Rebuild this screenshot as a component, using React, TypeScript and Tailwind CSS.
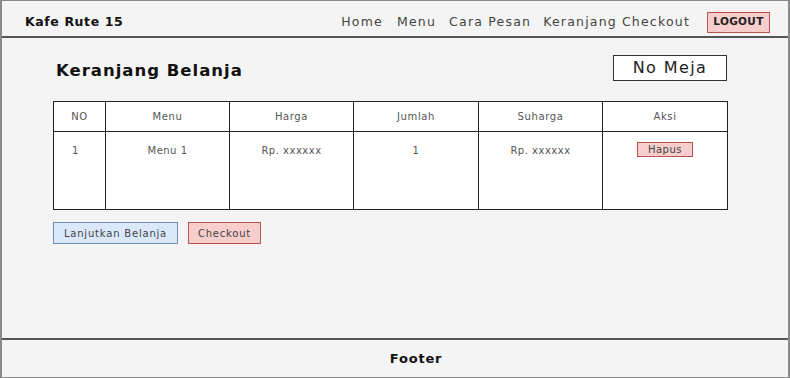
import React from "react";

const font = { fontFamily: '"DejaVu Sans", "Liberation Sans", sans-serif' };

export default function App() {
  const cols = [
    { label: "NO", w: 52 },
    { label: "Menu", w: 124 },
    { label: "Harga", w: 124 },
    { label: "Jumlah", w: 125 },
    { label: "Suharga", w: 124 },
    { label: "Aksi", w: 125 },
  ];
  return (
    <div
      style={font}
      className="w-[790px] h-[378px] bg-[#f4f4f4] border-x-2 border-y border-[#8a8a8a] flex flex-col box-border overflow-hidden"
    >
      <header className="h-[37px] shrink-0 border-b-2 border-[#555] flex items-center pt-[7px] pl-[23px] pr-[18px]">
        <div className="text-[12.5px] font-bold text-[#111] tracking-[0.6px]">Kafe Rute 15</div>
        <nav className="ml-auto flex items-center text-[12.5px] text-[#444] tracking-[1.2px]">
          <span className="mr-[14px]">Home</span>
          <span className="mr-[13px]">Menu</span>
          <span className="mr-[12px]">Cara Pesan</span>
          <span className="mr-[5px]">Keranjang</span>
          <span>Checkout</span>
        </nav>
        <button className="ml-[17px] w-[63px] h-[21px] bg-[#f8cecc] border border-[#b85450] text-[10.5px] font-bold text-[#222] tracking-[0.3px]">
          LOGOUT
        </button>
      </header>

      <main className="flex-1 pl-[51px] pr-[61px] pt-[17px]">
        <div className="flex items-center justify-between h-[26px]">
          <h1 className="pl-[3px] pt-[6px] text-[16.5px] font-bold text-[#111] tracking-[1px]">Keranjang Belanja</h1>
          <div className="w-[114px] h-[26px] bg-white border border-[#333] flex items-center justify-center text-[16px] text-[#222] tracking-[1.4px]">
            No Meja
          </div>
        </div>

        <table className="mt-[20px] border-collapse bg-white table-fixed w-[674px]">
          <colgroup>
            {cols.map((c) => (
              <col key={c.label} style={{ width: c.w }} />
            ))}
          </colgroup>
          <thead>
            <tr className="h-[30px]">
              {cols.map((c) => (
                <th
                  key={c.label}
                  className="border border-[#222] font-normal text-[10px] text-[#555] text-center align-middle tracking-[0.6px]"
                >
                  {c.label}
                </th>
              ))}
            </tr>
          </thead>
          <tbody>
            <tr className="h-[78px] text-[10px] text-[#555] tracking-[0.5px]">
              <td className="border border-[#222] align-top pt-[11px] pl-[18px] text-left">1</td>
              <td className="border border-[#222] align-top pt-[11px] text-center">Menu 1</td>
              <td className="border border-[#222] align-top pt-[11px] text-center">Rp. xxxxxx</td>
              <td className="border border-[#222] align-top pt-[11px] text-center">1</td>
              <td className="border border-[#222] align-top pt-[11px] text-center">Rp. xxxxxx</td>
              <td className="border border-[#222] align-top pt-[10px] text-center">
                <span className="inline-flex items-center justify-center w-[56px] h-[15px] bg-[#f8cecc] border border-[#b85450] text-[10px] text-[#444]">
                  Hapus
                </span>
              </td>
            </tr>
          </tbody>
        </table>

        <div className="mt-[12px] flex gap-[10px]">
          <button className="w-[125px] h-[22px] bg-[#dae8fc] border border-[#6c8ebf] text-[10px] text-[#444] tracking-[0.8px]">
            Lanjutkan Belanja
          </button>
          <button className="w-[73px] h-[22px] bg-[#f8cecc] border border-[#b85450] text-[10px] text-[#444] tracking-[0.8px]">
            Checkout
          </button>
        </div>
      </main>

      <footer className="h-[39px] shrink-0 border-t-2 border-[#555] flex items-center justify-center pl-[42px]">
        <span className="text-[13px] font-bold text-[#111] tracking-[0.8px]">Footer</span>
      </footer>
    </div>
  );
}
